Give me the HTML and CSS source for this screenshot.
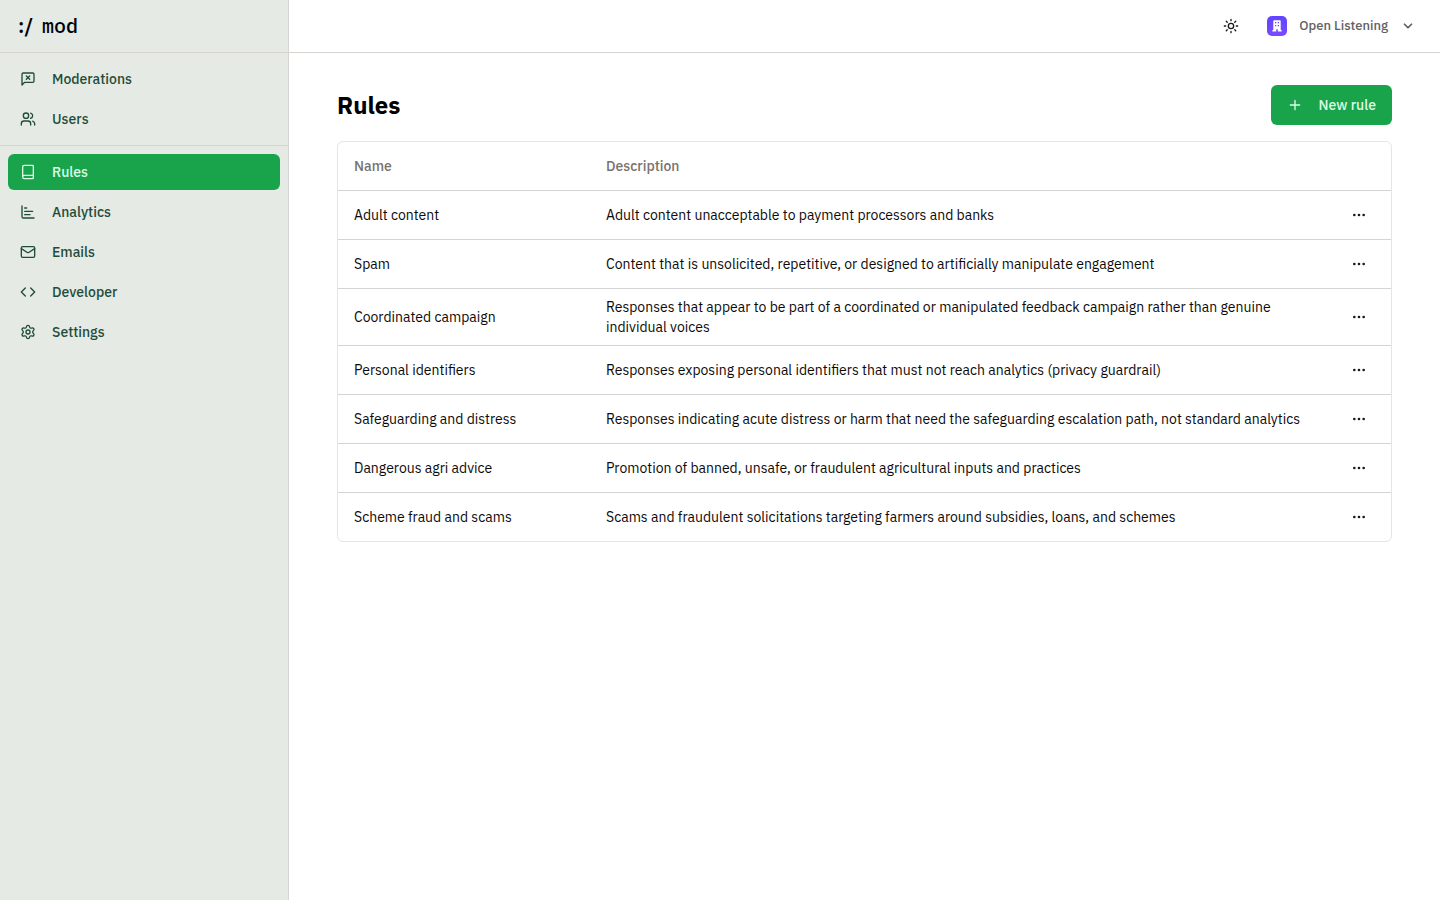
FILE: index.html
```html
<!DOCTYPE html>
<html lang="en">
<head>
<meta charset="utf-8">
<meta name="viewport" content="width=device-width, initial-scale=1">
<title>Rules</title>
<link rel="stylesheet" href="styles.css">
</head>
<body>
<svg class="sprite" aria-hidden="true">
  <symbol id="dots" viewBox="0 0 24 24"><circle cx="12" cy="12" r="1"/><circle cx="19" cy="12" r="1"/><circle cx="5" cy="12" r="1"/></symbol>
</svg>
<div class="app">
  <aside class="sidebar">
    <a class="brand" href="#"><span class="brand-mark">:/</span><span>mod</span></a>
    <nav class="nav">
      <div class="nav-group">
        <a class="nav-link" href="#"><svg class="icon" viewBox="0 0 24 24"><path d="M21 15a2 2 0 0 1-2 2H7l-4 4V5a2 2 0 0 1 2-2h14a2 2 0 0 1 2 2z"/><path d="m14.500 7.500-5 5"/><path d="m9.500 7.500 5 5"/></svg>Moderations</a>
        <a class="nav-link" href="#"><svg class="icon" viewBox="0 0 24 24"><path d="M16 21v-2a4 4 0 0 0-4-4H6a4 4 0 0 0-4 4v2"/><circle cx="9" cy="7" r="4"/><path d="M22 21v-2a4 4 0 0 0-3-3.870"/><path d="M16 3.130a4 4 0 0 1 0 7.750"/></svg>Users</a>
      </div>
      <div class="nav-group">
        <a class="nav-link active" href="#" aria-current="page"><svg class="icon" viewBox="0 0 24 24"><path d="M4 19.500v-15A2.500 2.500 0 0 1 6.500 2H19a1 1 0 0 1 1 1v18a1 1 0 0 1-1 1H6.500a1 1 0 0 1 0-5H20"/></svg>Rules</a>
        <a class="nav-link" href="#"><svg class="icon" viewBox="0 0 24 24"><path d="M3 3v16a2 2 0 0 0 2 2h16"/><path d="M7 16h8"/><path d="M7 11h12"/><path d="M7 6h3"/></svg>Analytics</a>
        <a class="nav-link" href="#"><svg class="icon" viewBox="0 0 24 24"><rect width="20" height="16" x="2" y="4" rx="2"/><path d="m22 7-8.970 5.700a1.940 1.940 0 0 1-2.060 0L2 7"/></svg>Emails</a>
        <a class="nav-link" href="#"><svg class="icon" viewBox="0 0 24 24"><path d="m16 18 6-6-6-6"/><path d="m8 6-6 6 6 6"/></svg>Developer</a>
        <a class="nav-link" href="#"><svg class="icon" viewBox="0 0 24 24"><path d="M9.671 4.136a2.340 2.340 0 0 1 4.659 0 2.340 2.340 0 0 0 3.319 1.915 2.340 2.340 0 0 1 2.330 4.033 2.340 2.340 0 0 0 0 3.831 2.340 2.340 0 0 1-2.330 4.033 2.340 2.340 0 0 0-3.319 1.915 2.340 2.340 0 0 1-4.659 0 2.340 2.340 0 0 0-3.320-1.915 2.340 2.340 0 0 1-2.330-4.033 2.340 2.340 0 0 0 0-3.831A2.340 2.340 0 0 1 6.350 6.051a2.340 2.340 0 0 0 3.319-1.915"/><circle cx="12" cy="12" r="3"/></svg>Settings</a>
      </div>
    </nav>
  </aside>
  <div class="content">
    <header class="topbar">
      <button class="theme" type="button" aria-label="Toggle theme"><svg class="icon" viewBox="0 0 24 24"><circle cx="12" cy="12" r="4"/><path d="M12 2v2M12 20v2M4.930 4.930l1.410 1.410M17.660 17.660l1.410 1.410M2 12h2M20 12h2M6.340 17.660l-1.410 1.410M19.070 4.930l-1.410 1.410"/></svg></button>
      <button class="org" type="button">
        <svg class="org-logo" viewBox="0 0 20 20" aria-hidden="true"><defs><radialGradient id="glow" cx=".5" cy="1" r="1"><stop offset="0" stop-color="#7d4dff"/><stop offset="1" stop-color="#6244ff"/></radialGradient></defs><rect width="20" height="20" rx="5" fill="url(#glow)"/><path fill="#fff" fill-rule="evenodd" d="M7 4.300h6a.7.7 0 0 1 .7.7v9h.9v1.500h-3.800v-2.300H9.200v2.300H5.400V14h.9V5a.7.7 0 0 1 .7-.7zM8 6v1.300h1.300V6zM10.700 6v1.300H12V6zM8 9v1.300h1.300V9zM10.700 9v1.300H12V9z"/></svg>
        <span>Open Listening</span>
        <svg class="chevron" viewBox="0 0 24 24"><path d="m6 9 6 6 6-6"/></svg>
      </button>
    </header>
    <main class="page">
      <div class="page-head">
        <h1>Rules</h1>
        <button class="primary" type="button"><svg class="icon" viewBox="0 0 24 24"><path d="M5 12h14M12 5v14"/></svg>New rule</button>
      </div>
      <div class="table-box">
        <table>
          <thead><tr><th class="name" scope="col">Name</th><th scope="col">Description</th><td class="actions"></td></tr></thead>
          <tbody>
            <tr><td>Adult content</td><td>Adult content unacceptable to payment processors and banks</td><td class="actions"><button class="more" type="button" aria-label="Actions for Adult content"><svg class="icon"><use href="#dots"/></svg></button></td></tr>
            <tr><td>Spam</td><td>Content that is unsolicited, repetitive, or designed to artificially manipulate engagement</td><td class="actions"><button class="more" type="button" aria-label="Actions for Spam"><svg class="icon"><use href="#dots"/></svg></button></td></tr>
            <tr><td>Coordinated campaign</td><td>Responses that appear to be part of a coordinated or manipulated feedback campaign rather than genuine individual voices</td><td class="actions"><button class="more" type="button" aria-label="Actions for Coordinated campaign"><svg class="icon"><use href="#dots"/></svg></button></td></tr>
            <tr><td>Personal identifiers</td><td>Responses exposing personal identifiers that must not reach analytics (privacy guardrail)</td><td class="actions"><button class="more" type="button" aria-label="Actions for Personal identifiers"><svg class="icon"><use href="#dots"/></svg></button></td></tr>
            <tr><td>Safeguarding and distress</td><td>Responses indicating acute distress or harm that need the safeguarding escalation path, not standard analytics</td><td class="actions"><button class="more" type="button" aria-label="Actions for Safeguarding and distress"><svg class="icon"><use href="#dots"/></svg></button></td></tr>
            <tr><td>Dangerous agri advice</td><td>Promotion of banned, unsafe, or fraudulent agricultural inputs and practices</td><td class="actions"><button class="more" type="button" aria-label="Actions for Dangerous agri advice"><svg class="icon"><use href="#dots"/></svg></button></td></tr>
            <tr><td>Scheme fraud and scams</td><td>Scams and fraudulent solicitations targeting farmers around subsidies, loans, and schemes</td><td class="actions"><button class="more" type="button" aria-label="Actions for Scheme fraud and scams"><svg class="icon"><use href="#dots"/></svg></button></td></tr>
          </tbody>
        </table>
      </div>
    </main>
  </div>
</div>
</body>
</html>
```
FILE: styles.css
```css
*, *::before, *::after { box-sizing: border-box; }
body {
  margin: 0;
  font: 14px/20px "IBM Plex Sans", Roboto, "Liberation Sans", sans-serif;
  color: #0c0a09;
  background: #fff;
}
button {
  font: inherit;
  color: inherit;
  background: none;
  border: 0;
  padding: 0;
  cursor: pointer;
}
a { color: inherit; text-decoration: none; }
.sprite { position: absolute; width: 0; height: 0; }
.icon, .chevron {
  width: 16px;
  height: 16px;
  flex: none;
  fill: none;
  stroke: currentColor;
  stroke-width: 2;
  stroke-linecap: round;
  stroke-linejoin: round;
}
.app { display: flex; min-height: 100vh; }
.sidebar {
  width: 289px;
  flex: none;
  background: #e5eae5;
  border-right: 1px solid #d6d3d1;
}
.brand {
  display: flex;
  align-items: center;
  gap: 6px;
  height: 53px;
  padding: 0 18px;
  border-bottom: 1px solid #d6d3d1;
  font: 500 20px/28px "IBM Plex Mono", "DejaVu Sans Mono", monospace;
  color: #000;
}
.brand-mark {
  width: 18px;
  font-family: "IBM Plex Sans", Roboto, sans-serif;
  font-weight: 600;
}
.nav-group {
  display: flex;
  flex-direction: column;
  gap: 4px;
  padding: 8px;
}
.nav-group + .nav-group { border-top: 1px solid #d6d3d1; }
.nav-link {
  display: flex;
  align-items: center;
  gap: 16px;
  height: 36px;
  padding: 0 12px;
  border-radius: 6px;
  font-weight: 500;
  color: #1f4d3a;
}
.nav-link.active { background: #19a44b; color: #dcfce7; }
.content { flex: 1; min-width: 0; }
.topbar {
  display: flex;
  align-items: center;
  justify-content: flex-end;
  gap: 16px;
  height: 53px;
  padding: 0 24px;
  border-bottom: 1px solid #d6d3d1;
}
.theme {
  display: grid;
  place-items: center;
  width: 40px;
  height: 40px;
  color: #1c1917;
}
.org {
  display: flex;
  align-items: center;
  gap: 12px;
  font-size: 13px;
  font-weight: 500;
  color: #616161;
}
.org-logo { width: 20px; height: 20px; }
.chevron { width: 16px; stroke-width: 3; height: 14px; }
.page { padding: 32px 48px; }
.page-head {
  display: flex;
  align-items: center;
  justify-content: space-between;
  margin-bottom: 16px;
}
h1 {
  margin: 0;
  font-size: 24px;
  line-height: 32px;
  font-weight: 700;
  color: #000;
}
.primary {
  display: flex;
  align-items: center;
  gap: 16px;
  height: 40px;
  padding: 0 16px;
  border-radius: 6px;
  background: #19a44b;
  color: #dcfce7;
  font-weight: 500;
}
.table-box {
  border: 1px solid #e5e5e5;
  border-radius: 6px;
}
table {
  width: 100%;
  table-layout: fixed;
  border-collapse: separate;
  border-spacing: 0;
}
th, td {
  height: 48px;
  padding: 8px 16px;
  text-align: left;
  vertical-align: middle;
}
th { font-weight: 500; color: #78716c; }
tbody td { height: 49px; border-top: 1px solid #d4d4d4; }
.name { width: 252px; }
.actions { width: 64px; }
.more {
  display: grid;
  place-items: center;
  width: 32px;
  height: 32px;
  color: #1c1917;
}
```
